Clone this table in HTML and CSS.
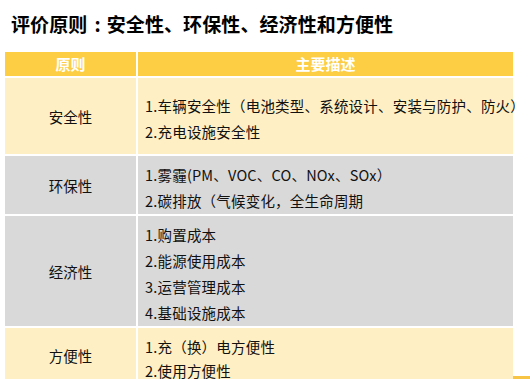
FILE: index.html
```html
<!DOCTYPE html>
<html lang="zh">
<head>
<meta charset="utf-8">
<link rel="stylesheet" href="styles.css">
</head>
<body>
<h1 class="title">评价原则<span class="colon">:</span>安全性、环保性、经济性和方便性</h1>
<table class="grid">
  <colgroup><col class="w1"><col class="w2"></colgroup>
  <thead>
    <tr class="head"><th class="c1">原则</th><th class="c2">主要描述</th></tr>
  </thead>
  <tbody>
    <tr class="row r1 light">
      <td class="c1">安全性</td>
      <td class="c2"><div>1.车辆安全性（电池类型、系统设计、安装与防护、防火）</div><div>2.充电设施安全性</div></td>
    </tr>
    <tr class="row r2 grey">
      <td class="c1">环保性</td>
      <td class="c2"><div>1.雾霾(PM、VOC、CO、NOx、SOx）</div><div>2.碳排放（气候变化，全生命周期</div></td>
    </tr>
    <tr class="row r3 grey">
      <td class="c1">经济性</td>
      <td class="c2"><div>1.购置成本</div><div>2.能源使用成本</div><div>3.运营管理成本</div><div>4.基础设施成本</div></td>
    </tr>
    <tr class="row r4 light">
      <td class="c1">方便性</td>
      <td class="c2"><div>1.充（换）电方便性</div><div>2.使用方便性</div></td>
    </tr>
  </tbody>
</table>
<div class="corner"></div>
</body>
</html>
```

FILE: styles.css
```css
html, body {
  margin: 0;
  padding: 0;
  background: #ffffff;
  overflow: hidden;
}
body {
  width: 530px;
  height: 379px;
  position: relative;
  font-family: "Noto Sans CJK SC", "Noto Sans", sans-serif;
  color: #111;
}
.title {
  margin: 0;
  padding: 10px 0 0 11px;
  height: 32px;
  font-size: 19px;
  line-height: 28px;
  font-weight: 700;
  color: #000;
  letter-spacing: 0.1px;
}
.colon {
  padding: 0 6px 0 7px;
}
.grid {
  margin: 10px 0 0 5px;
  width: 508px;
  border-collapse: collapse;
  table-layout: fixed;
  font-size: 14.5px;
}
.w1 { width: 132px; }
.w2 { width: 376px; }
.grid th, .grid td {
  border: 2px solid #ffffff;
  padding: 0;
}
.grid tr:first-child th, .grid tr:first-child td { border-top: 0; }
.grid th:first-child, .grid td:first-child { border-left: 0; }
.grid th:last-child, .grid td:last-child { border-right: 0; }
.head th {
  background: #fdcd44;
  color: #fff;
  font-weight: 700;
  font-size: 15px;
  height: 24px;
  line-height: 24px;
  text-align: center;
}
.c1 { text-align: center; }
.row td { vertical-align: middle; }
.row td.c2 {
  padding-left: 7px;
  line-height: 26px;
  white-space: nowrap;
  overflow: visible;
  letter-spacing: 0.2px;
}
.light td { background: #ffefc4; }
.grey td { background: #d9d9d9; }
.r1 td { height: 76px; }
.r1 td.c2 { padding-top: 6px; height: 70px; }
.r2 td { height: 55px; }
.r2 td.c2 { padding-top: 6px; height: 49px; }
.r3 td { height: 108px; }
.r3 td.c2 { padding-top: 6px; height: 102px; }
.r4 td { height: 60px; }
.r4 td.c2 {
  vertical-align: top;
  padding-top: 7px;
  height: 53px;
  line-height: 24px;
}
.r4 td.c1 { vertical-align: top; padding-top: 17px; height: 43px; }
.corner {
  position: absolute;
  left: 513px;
  top: 376px;
  width: 17px;
  height: 3px;
  background: #f7c446;
}
```
